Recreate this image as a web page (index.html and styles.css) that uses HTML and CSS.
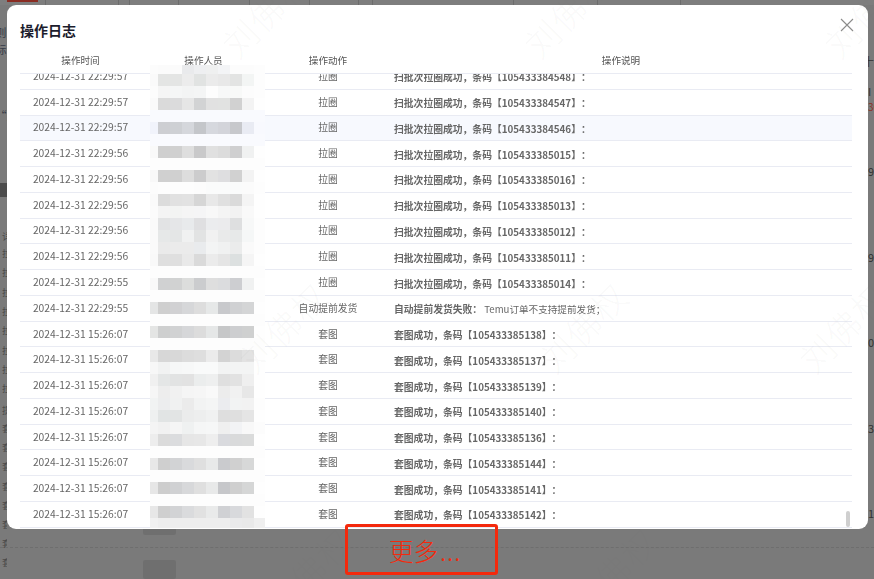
FILE: index.html
```html
<!DOCTYPE html>
<html lang="zh-CN">
<head>
<meta charset="utf-8">
<title>操作日志</title>
<link rel="stylesheet" href="styles.css">
</head>
<body>
<div class="page">
  <div class="tabs">
    <i class="tab active"></i><i class="tick t1"></i><i class="tick t2"></i><i class="tick t3"></i><i class="tick t4"></i><i class="tick t5"></i><i class="tick t6"></i><i class="tick t7"></i><i class="tick t8"></i><i class="tick t9"></i><i class="tick t10"></i><i class="tick t11"></i>
  </div>
  <div class="left-strip">
    <span class="frag f32">则</span><span class="frag f49">标</span><span class="frag f80">、</span><span class="frag f115">“更</span>
    <span class="dark-bar"></span>
    <span class="frag s f236">详</span><span class="frag s f253">拉</span><span class="frag s f272">拉</span><span class="frag s f292">拉</span><span class="frag s f311">拉</span><span class="frag s f330">拉</span><span class="frag s f350">拉</span><span class="frag s f369">拉</span><span class="frag s f388">拉</span><span class="frag s f410">提</span><span class="frag s f428">套</span><span class="frag s f447">套</span><span class="frag s f466">套</span><span class="frag s f486">套</span><span class="frag s f505">套</span><span class="frag s f524">套</span><span class="frag s f543">套</span><span class="frag s f562">套</span>
  </div>
  <div class="right-strip">
    <span class="frag-r r61">十</span><span class="frag-r r90">I</span><span class="frag-r red r105">30</span><span class="frag-r r171">9</span><span class="frag-r r257">9</span><span class="frag-r r342">0</span><span class="frag-r r428">3</span><span class="frag-r r513">1</span>
  </div>
  <div class="dash"></div>
  <div class="thumb th1"></div>
  <div class="thumb th2"></div>
</div>

<div class="overlay">
  <section class="modal">
    <header class="modal-head">
      <h2 class="modal-title">操作日志</h2>
      <svg class="close" width="14" height="14" viewBox="0 0 14 14"><path d="M1 1 13 13M13 1 1 13" fill="none" stroke="#8c8c8c" stroke-width="1.1"/></svg>
    </header>
    <div class="table">
      <div class="row head"><div>操作时间</div><div>操作人员</div><div>操作动作</div><div>操作说明</div></div>
      <div class="body">
        <div class="rows">
          <div class="row"><div class="time">2024-12-31 22:29:57</div><div></div><div>拉圈</div><div class="desc"><b>扫批次拉圈成功&#xFF0C;条码【105433384548】&#xFF1A;</b></div></div>
          <div class="row"><div class="time">2024-12-31 22:29:57</div><div></div><div>拉圈</div><div class="desc"><b>扫批次拉圈成功&#xFF0C;条码【105433384547】&#xFF1A;</b></div></div>
          <div class="row hover"><div class="time">2024-12-31 22:29:57</div><div></div><div>拉圈</div><div class="desc"><b>扫批次拉圈成功&#xFF0C;条码【105433384546】&#xFF1A;</b></div></div>
          <div class="row"><div class="time">2024-12-31 22:29:56</div><div></div><div>拉圈</div><div class="desc"><b>扫批次拉圈成功&#xFF0C;条码【105433385015】&#xFF1A;</b></div></div>
          <div class="row"><div class="time">2024-12-31 22:29:56</div><div></div><div>拉圈</div><div class="desc"><b>扫批次拉圈成功&#xFF0C;条码【105433385016】&#xFF1A;</b></div></div>
          <div class="row"><div class="time">2024-12-31 22:29:56</div><div></div><div>拉圈</div><div class="desc"><b>扫批次拉圈成功&#xFF0C;条码【105433385013】&#xFF1A;</b></div></div>
          <div class="row"><div class="time">2024-12-31 22:29:56</div><div></div><div>拉圈</div><div class="desc"><b>扫批次拉圈成功&#xFF0C;条码【105433385012】&#xFF1A;</b></div></div>
          <div class="row"><div class="time">2024-12-31 22:29:56</div><div></div><div>拉圈</div><div class="desc"><b>扫批次拉圈成功&#xFF0C;条码【105433385011】&#xFF1A;</b></div></div>
          <div class="row"><div class="time">2024-12-31 22:29:55</div><div></div><div>拉圈</div><div class="desc"><b>扫批次拉圈成功&#xFF0C;条码【105433385014】&#xFF1A;</b></div></div>
          <div class="row"><div class="time">2024-12-31 22:29:55</div><div></div><div>自动提前发货</div><div class="desc"><b>自动提前发货失败&#xFF1A;</b> Temu订单不支持提前发货&#xFF1B;</div></div>
          <div class="row"><div class="time">2024-12-31 15:26:07</div><div></div><div>套图</div><div class="desc"><b>套图成功&#xFF0C;条码【105433385138】&#xFF1A;</b></div></div>
          <div class="row"><div class="time">2024-12-31 15:26:07</div><div></div><div>套图</div><div class="desc"><b>套图成功&#xFF0C;条码【105433385137】&#xFF1A;</b></div></div>
          <div class="row"><div class="time">2024-12-31 15:26:07</div><div></div><div>套图</div><div class="desc"><b>套图成功&#xFF0C;条码【105433385139】&#xFF1A;</b></div></div>
          <div class="row"><div class="time">2024-12-31 15:26:07</div><div></div><div>套图</div><div class="desc"><b>套图成功&#xFF0C;条码【105433385140】&#xFF1A;</b></div></div>
          <div class="row"><div class="time">2024-12-31 15:26:07</div><div></div><div>套图</div><div class="desc"><b>套图成功&#xFF0C;条码【105433385136】&#xFF1A;</b></div></div>
          <div class="row"><div class="time">2024-12-31 15:26:07</div><div></div><div>套图</div><div class="desc"><b>套图成功&#xFF0C;条码【105433385144】&#xFF1A;</b></div></div>
          <div class="row"><div class="time">2024-12-31 15:26:07</div><div></div><div>套图</div><div class="desc"><b>套图成功&#xFF0C;条码【105433385141】&#xFF1A;</b></div></div>
          <div class="row"><div class="time">2024-12-31 15:26:07</div><div></div><div>套图</div><div class="desc"><b>套图成功&#xFF0C;条码【105433385142】&#xFF1A;</b></div></div>
        </div>
        <div class="scroll-thumb"></div>
      </div>
    </div>
  </section>
</div>

<div class="mosaic" id="mosaic"></div>

<div class="watermarks">
  <span class="wm w1">刘佛权</span><span class="wm w2">刘佛权</span><span class="wm w3">刘佛权</span>
  <span class="wm w4">刘佛权</span><span class="wm w5">刘佛权</span><span class="wm w6">刘佛权</span>
  <span class="wm w7">刘佛权</span><span class="wm w8">刘佛权</span>
</div>

<div class="more">更多<span class="dots">...</span></div>
<script src="mosaic.js"></script>
</body>
</html>
```
FILE: styles.css
```css
* { box-sizing: border-box; }
html, body { margin: 0; padding: 0; height: 100%; overflow: hidden; }
body { background: #7a7a7a; font-family: "Noto Sans CJK SC", "Noto Sans", sans-serif; color: #666; }

/* dimmed page behind the dialog */
.page { position: absolute; inset: 0; overflow: hidden; }
.tabs { height: 5px; background: #7e7e7e; position: relative; }
.tab.active { position: absolute; left: 7px; width: 31px; top: 0; height: 2px; background: #8a2c22; }
.tick { position: absolute; top: 0; width: 1px; height: 5px; background: #6c6c6c; }
.t1 { left: 45px; } .t2 { left: 118px; } .t3 { left: 129px; } .t4 { left: 178px; } .t5 { left: 249px; }
.t6 { left: 309px; } .t7 { left: 358px; } .t8 { left: 372px; } .t9 { left: 513px; } .t10 { left: 597px; } .t11 { left: 680px; }
.left-strip, .right-strip { position: absolute; top: 0; bottom: 0; overflow: hidden; }
.left-strip { left: 0; width: 7px; }
.right-strip { left: 868px; width: 6px; }
.frag { position: absolute; left: -5px; font-size: 11.5px; line-height: 14px; color: #363c48; white-space: nowrap; }
.frag.s { left: 2px; font-size: 9.5px; line-height: 12px; color: #4a4a4a; }
.f32 { top: 25px; } .f49 { top: 42px; } .f80 { top: 73px; } .f115 { top: 108px; }
.f236 { top: 230px; } .f253 { top: 247px; } .f272 { top: 266px; } .f292 { top: 286px; } .f311 { top: 305px; }
.f330 { top: 324px; } .f350 { top: 344px; } .f369 { top: 363px; } .f388 { top: 382px; } .f410 { top: 404px; }
.f428 { top: 422px; } .f447 { top: 441px; } .f466 { top: 460px; } .f486 { top: 480px; } .f505 { top: 499px; }
.f524 { top: 518px; } .f543 { top: 537px; } .f562 { top: 556px; }
.dark-bar { position: absolute; left: 0; top: 183px; width: 7px; height: 14px; background: #4b4b4b; }
.frag-r { position: absolute; left: 0; font-size: 11px; line-height: 14px; color: #333; white-space: nowrap; }
.frag-r.red { color: #8a3328; font-size: 10px; }
.r61 { top: 54px; left: -5px; } .r90 { top: 84px; } .r105 { top: 100px; } .r171 { top: 164px; } .r257 { top: 250px; } .r342 { top: 335px; } .r428 { top: 421px; } .r513 { top: 506px; }
.dash { position: absolute; left: 0; right: 0; top: 547px; border-top: 1px dashed #6e6e6e; }
.thumb { position: absolute; left: 143px; width: 33px; background: #6f6f6f; border-radius: 2px; }
.th1 { top: 525px; height: 10px; }
.th2 { top: 560px; height: 19px; }

/* dialog */
.overlay { position: absolute; inset: 0; padding: 5px 6px 50px 7px; display: flex; }
.modal { flex: 1; background: #fff; border-radius: 9px; display: flex; flex-direction: column; min-width: 0; padding: 0 16px 0 13px; overflow: hidden; }
.modal-head { height: 43px; flex: none; display: flex; justify-content: space-between; align-items: flex-start; }
.modal-title { margin: 14px 0 0; font-size: 14px; line-height: 22px; font-weight: 700; color: #1c1c2c; }
.close { margin: 13px -2px 0 0; }
.table { flex: 1; display: flex; flex-direction: column; min-height: 0; filter: blur(.3px); }
.row { display: grid; grid-template-columns: 121px 125px 124px 1fr; align-items: center; height: 25.78px; border-bottom: 1px solid #e9ebf3; padding-bottom: 1px; font-size: 9.8px; line-height: 14px; color: #666; text-align: center; white-space: nowrap; flex: none; }
.row.head { height: 26px; color: #555; font-size: 9.6px; padding-bottom: 2px; }
.row.hover { background: #f7f9fe; }
.time { font-size: 10.3px; }
.body { flex: 1; overflow: hidden; position: relative; min-height: 0; }
.rows { margin-top: -10px; }
.desc { text-align: left; padding: 3px 0 0 4px; font-size: 9.6px; text-spacing-trim: space-all; font-feature-settings: "palt" 0; }
.desc b { font-size: 9.8px; font-weight: 700; color: #666; }
.scroll-thumb { position: absolute; right: 2px; bottom: 2px; width: 4px; height: 16px; border-radius: 2px; background: #cfcfcf; }

/* redaction mosaic over the operator column */
.mosaic { position: absolute; left: 150px; top: 65px; width: 115px; display: grid; grid-template-columns: 8px repeat(8, 12px) 11px; grid-template-rows: 9px repeat(37, 12px) 10px; }

/* faint watermark over everything */
.watermarks { position: absolute; inset: 0; overflow: hidden; pointer-events: none; }
.wm { position: absolute; font-size: 34px; line-height: 40px; font-weight: 300; letter-spacing: 2px; color: rgba(120, 120, 120, .05); white-space: nowrap; transform: rotate(-45deg); transform-origin: 0 50%; }
.w1 { left: 228px; top: 30px; } .w2 { left: 530px; top: 30px; } .w3 { left: 830px; top: 30px; }
.w4 { left: 245px; top: 345px; } .w5 { left: 545px; top: 345px; } .w6 { left: 805px; top: 345px; }
.w7 { left: 270px; top: 590px; } .w8 { left: 575px; top: 590px; }

/* annotation */
.more { position: absolute; left: 345px; top: 524px; width: 153px; height: 51px; border: 3px solid #f4290c; border-radius: 3px; color: #f4290c; font-size: 24.5px; line-height: 48px; font-weight: 300; padding-left: 41px; }
.dots { letter-spacing: 1px; margin-left: 2px; }
```
FILE: mosaic.js
```js
var F = "fdfdfd", H = "f9fafe";
var data = [
  "fcfcfc fbfbfb fbfbfb e9eaec eeeff1 eff0f0 f3f4f6 fcfcfc fcfcfc fdfdfd",
  "fafafa e4e5e4 e4e5e4 ececec e1e3e2 ebebeb e8e8e8 e3e4e3 f3f5f4 fdfdfd",
  "fcfcfc f5f5f5 f5f6f6 f3f4f4 f4f5f5 fdfdfd f7f8f8 f8f9f8 fcfcfc fdfdfd",
  "fafafa dadada dbdbdc e6e6e6 d2d3d4 e1e1e1 e1e2e1 d1d1d1 f3f3f3 fefefe",
  H,
  "f1f3fb cdced2 ced0d4 d5d7dc c4c6ca d6d8de d3d4da c7c8cc e9ebf3 f8f9fe",
  H,
  "f9f9f9 cfcfcf d0d0d0 dedede c9c9ca e0e0e0 dcdcdc cfcfd0 f0f1f1 fefefe",
  F,
  "f8f8f8 d0d0d0 d0d0d0 dddddd cccccd e2e2e2 dedee0 d1d1d1 f3f3f3 fefefe",
  "fcfcfc fdfdfd fdfdfd fdfdfd fcfcfc fafbfb fafbfb fafbfb fbfbfb fdfdfd",
  "fafafa dcdcdc e1e1e1 e2e2e2 d6d6d6 e8e8e8 e0e0e0 dadada f4f4f4 fefefe",
  "fbfbfb f4f4f4 f3f4f3 f5f5f5 f5f5f6 f8f8f8 f4f4f4 f2f2f2 f9f9f9 fefefe",
  "fafafa e2e3e4 e5e6e8 e8eaec dfdfe1 ebecee ebebed dedfe0 f7f8f8 fdfdfd",
  "fafafa e6e8e8 e4e6e6 f0f1f1 e2e3e3 f1f1f1 e9eaea e7e9e9 f5f7f7 fdfdfd",
  "fafafa eaeaea ebebeb ebebeb e9ebed f3f4f4 f0f1f1 ebecec fafafa fdfdfd",
  "f9f9f9 dfdfdf dfdfdf e9e9e9 dadada ebebeb e5e5e5 dce0e0 f5f5f5 fefefe",
  F,
  "f9f9f9 d0d1d2 d1d2d2 dcdddc cbccce dedede dbdcde cdced1 f0f1f1 fefefe",
  F,
  "e4e5e5 cfcfcf d1d1d3 d6d7d9 dddddd e6e8e8 c8c9cc d0d1d3 d4d5d6 fefefe",
  F,
  "e4e5e4 cecfcf d1d2d3 d6d7d9 dcdcdc e5e7e7 c6c7c8 cdced0 cfd0d0 fefefe",
  F,
  "e8e8e8 d7d7d7 d8d8d8 dcdcdc dedede ebebeb d3d3d3 dcdcdc e2e2e2 fefefe",
  "f7f7f7 f1f2f2 f6f7f7 f7f8f8 f9fafa f9fafa f2f3f3 f3f4f4 f3f4f4 fefefe",
  "f0f0f0 e4e6e6 e2e3e3 e2e2e2 ebeded eeefef dfdfdf e2e2e2 efefef fefefe",
  "f6f6f6 ededed f1f1f1 f5f5f5 f6f6f6 f9f9f9 ececec f1f1f1 e7e7e7 fefefe",
  "f1f3f3 ecedee f0f1f1 ebebeb f2f3f3 f4f5f5 ebecef f2f3f3 f2f2f2 fdfdfd",
  "eef0f0 e1e4e4 e2e4e4 ebecec edeeee f0f1f1 dedede dfdfdf e5e5e5 fefefe",
  "f4f4f4 f1f1f1 f5f5f5 eff1f1 f5f6f6 f6f7f7 efefef f2f3f5 f8f8f8 fcfcfc",
  "ededed dbdbdb dbdcde e6e6e6 e7e7e7 eeeeee d9dade d9dadb dadbdb fefefe",
  F,
  "e8e8e8 cfcfcf d2d3d5 d9dadc dfdfdf e8e9e9 cacbce d0d0d0 d7d8d8 fefefe",
  F,
  "e6e6e6 cdcdcd d0d1d3 d7d8da dfdfdf e8e9e9 c6c7ca cfcfcf d5d6d6 fefefe",
  F,
  "e7e7e7 cfcfcf d2d3d5 dadbdd e1e1e1 e9eaea d0d1d4 d8d9dc e2e2e2 fefefe",
  "f1f1f1 eeeeee eeeeee eeeeee eeeeee eeeeee eeeeee eaeaeb e9e9e9 efefef"
];
var root = document.getElementById("mosaic");
data.forEach(function (line) {
  var cells = line.split(" ");
  for (var i = 0; i < 10; i++) {
    var cell = document.createElement("div");
    cell.style.background = "#" + (cells[i] || cells[0]);
    root.appendChild(cell);
  }
});
```
